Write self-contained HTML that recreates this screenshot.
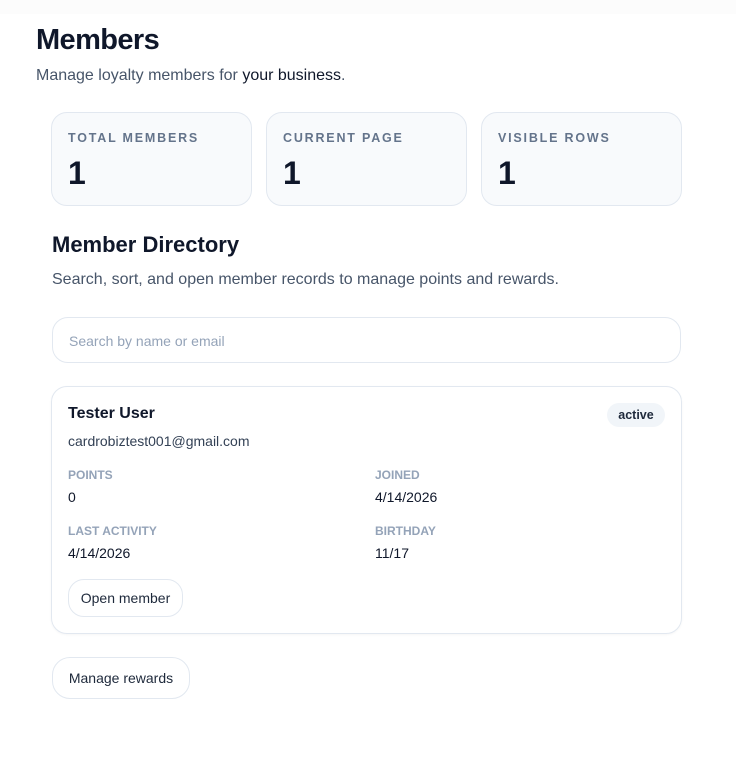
<!DOCTYPE html>
<html><head><meta charset="utf-8"><style>
*{box-sizing:border-box;margin:0;padding:0}
body{width:736px;height:758px;background:#fff;font-family:"Liberation Sans",sans-serif;position:relative;overflow:hidden;color:#0f172a}
.a{position:absolute}
.top{left:0;top:0;width:736px;height:14px;background:#fcfcfc}
h1{position:absolute;left:36px;top:24px;font-size:29px;font-weight:700;letter-spacing:-0.6px;color:#0f172a}
.sub{left:36px;top:67px;font-size:16px;color:#475569}
.stat{top:112px;width:201px;height:94px;border:1px solid #e2e8f0;border-radius:16px;background:#f8fafc}
.stat .l{position:absolute;left:16px;top:18px;font-size:12.5px;font-weight:700;letter-spacing:1.8px;color:#64748b}
.num{position:absolute;left:16px;top:42px;font-size:32px;font-weight:700;color:#0f172a}
h2{position:absolute;left:52px;top:232px;font-size:22px;font-weight:700;color:#0f172a}
.desc{left:52px;top:271px;font-size:16px;color:#475569}
.search{left:52px;top:317px;width:629px;height:46px;border:1px solid #e2e8f0;border-radius:16px;font-size:14px;color:#94a3b8;padding:15px 16px}
.card{left:51px;top:386px;width:631px;height:248px;border:1px solid #e2e8f0;border-radius:16px;box-shadow:0 1px 2px rgba(0,0,0,.04)}
.name{left:68px;top:405px;font-size:16px;font-weight:700;color:#0f172a}
.badge{left:607px;top:403px;width:58px;height:24px;border-radius:12px;background:#f1f5f9;font-size:12.5px;font-weight:700;color:#1e293b;text-align:center;line-height:24px}
.email{left:68px;top:433px;font-size:14px;color:#334155}
.lab{font-size:12px;font-weight:700;color:#94a3b8}
.val{font-size:14px;color:#0f172a}
.btn{border:1px solid #e2e8f0;border-radius:16px;font-size:14px;color:#1e293b;text-align:center}
</style></head><body>
<div class="a top"></div>
<h1>Members</h1>
<div class="a sub">Manage loyalty members for <span style="color:#0f172a">your business</span>.</div>
<div class="a stat" style="left:51px"><div class="l">TOTAL MEMBERS</div><div class="num">1</div></div>
<div class="a stat" style="left:266px"><div class="l">CURRENT PAGE</div><div class="num">1</div></div>
<div class="a stat" style="left:481px"><div class="l">VISIBLE ROWS</div><div class="num">1</div></div>
<h2>Member Directory</h2>
<div class="a desc">Search, sort, and open member records to manage points and rewards.</div>
<div class="a search">Search by name or email</div>
<div class="a card"></div>
<div class="a name">Tester User</div>
<div class="a badge">active</div>
<div class="a email">cardrobiztest001@gmail.com</div>
<div class="a lab" style="left:68px;top:468px">POINTS</div>
<div class="a val" style="left:68px;top:489px">0</div>
<div class="a lab" style="left:375px;top:468px">JOINED</div>
<div class="a val" style="left:375px;top:489px">4/14/2026</div>
<div class="a lab" style="left:68px;top:524px">LAST ACTIVITY</div>
<div class="a val" style="left:68px;top:545px">4/14/2026</div>
<div class="a lab" style="left:375px;top:524px">BIRTHDAY</div>
<div class="a val" style="left:375px;top:545px">11/17</div>
<div class="a btn" style="left:68px;top:579px;width:115px;height:38px;line-height:36px">Open member</div>
<div class="a btn" style="left:52px;top:657px;width:138px;height:42px;line-height:40px;border-radius:18px">Manage rewards</div>
</body></html>
